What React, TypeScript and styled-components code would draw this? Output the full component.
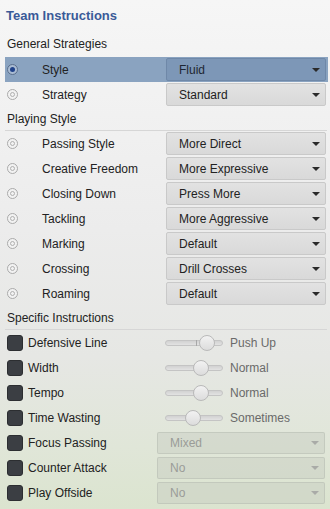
import React from "react";
import styled, { createGlobalStyle, css } from "styled-components";

const Global = createGlobalStyle`
  html, body { margin: 0; padding: 0; }
  body {
    width: 330px;
    height: 509px;
    overflow: hidden;
    font-family: "Liberation Sans", Arial, sans-serif;
    font-size: 12px;
    color: #222;
    background: linear-gradient(180deg, #f6f6f6 0%, #ececec 45%, #e6e7e4 70%, #e0e6d8 88%, #dbe4cf 100%);
  }
`;

const Panel = styled.div`
  width: 330px;
  height: 509px;
  box-sizing: border-box;
  padding: 0 2px 0 5px;
  display: flex;
  flex-direction: column;
`;

const Title = styled.div`
  height: 31px;
  display: flex;
  align-items: center;
  font-size: 13px;
  font-weight: bold;
  color: #3a5a98;
  padding-left: 1px;
`;

const Header = styled.div<{ $h: number; $line?: boolean }>`
  height: ${(p) => p.$h}px;
  box-sizing: border-box;
  display: flex;
  align-items: center;
  padding-left: 2px;
  border-bottom: 1px solid ${(p) => (p.$line === false ? "transparent" : "#d6d6d6")};
  color: #222;
  margin-right: 1px;
`;

const Row = styled.div<{ $selected?: boolean }>`
  height: 25px;
  display: flex;
  align-items: center;
  ${(p) =>
    p.$selected &&
    css`
      background: #8aa3c0;
    `}
`;

const RadioCell = styled.div`
  width: 37px;
  display: flex;
  align-items: center;
  padding-left: 2px;
  box-sizing: border-box;
`;

const Radio = styled.span<{ $on?: boolean }>`
  width: 11px;
  height: 11px;
  box-sizing: border-box;
  border-radius: 50%;
  border: 1px solid ${(p) => (p.$on ? "#5b6f8c" : "#aaa")};
  background: ${(p) => (p.$on ? "#a9bbd2" : "#f2f2f2")};
  display: flex;
  align-items: center;
  justify-content: center;
  &::after {
    content: "";
    width: 5px;
    height: 5px;
    border-radius: 50%;
    background: ${(p) => (p.$on ? "#21438a" : "transparent")};
    border: ${(p) => (p.$on ? "none" : "1px solid #b0b0b0")};
    box-sizing: border-box;
  }
`;

const Label = styled.div<{ $w: number }>`
  width: ${(p) => p.$w}px;
  flex: none;
  white-space: nowrap;
`;

const Select = styled.div<{ $variant?: "normal" | "selected" | "disabled" }>`
  flex: 1;
  height: 23px;
  box-sizing: border-box;
  margin-right: 2px;
  border-radius: 2px;
  display: flex;
  align-items: center;
  justify-content: space-between;
  padding: 0 5px 0 12px;
  ${(p) =>
    p.$variant === "selected"
      ? css`
          background: #7d97b7;
          border: 1px solid #6f88a8;
          color: #1d2633;
        `
      : p.$variant === "disabled"
      ? css`
          height: 22px;
          margin-right: 3px;
          background: rgba(195, 200, 190, 0.4);
          border: 1px solid rgba(180, 185, 175, 0.5);
          color: #9a9c98;
        `
      : css`
          background: linear-gradient(180deg, #e2e2e2 0%, #d9d9d9 100%);
          border: 1px solid #c9c9c9;
          color: #222;
        `}
`;

const Arrow = styled.span<{ $dim?: boolean }>`
  width: 0;
  height: 0;
  border-left: 4px solid transparent;
  border-right: 4px solid transparent;
  border-top: 4px solid ${(p) => (p.$dim ? "#a9aba7" : "#2a2a2a")};
`;

const CheckCell = styled.div`
  width: 23px;
  flex: none;
  display: flex;
  align-items: center;
  padding-left: 2px;
  box-sizing: border-box;
`;

const Check = styled.span`
  width: 16px;
  height: 16px;
  border-radius: 3px;
  background: #3b3e43;
  border: 1px solid #2c2e31;
  box-sizing: border-box;
`;

const SliderWrap = styled.div`
  display: flex;
  align-items: center;
  margin-left: 7px;
`;

const Track = styled.div`
  position: relative;
  width: 58px;
  height: 6px;
  border-radius: 3px;
  background: linear-gradient(180deg, #d2d2d2, #e2e2e2);
  border: 1px solid #c4c4c4;
  box-sizing: border-box;
  &::before {
    content: "";
    position: absolute;
    left: 30px;
    top: -1px;
    width: 1px;
    height: 6px;
    background: #a8a8a8;
  }
`;

const Thumb = styled.span`
  position: absolute;
  top: 50%;
  width: 16px;
  height: 16px;
  margin-left: -8px;
  margin-top: -8px;
  border-radius: 50%;
  box-sizing: border-box;
  background: linear-gradient(180deg, #f2f2f2, #dcdcdc);
  border: 1px solid #b9b9b9;
`;

const SliderText = styled.span`
  margin-left: 7px;
  color: #6a6a6a;
`;

const general = [
  { label: "Style", value: "Fluid", selected: true },
  { label: "Strategy", value: "Standard" },
];

const playing = [
  ["Passing Style", "More Direct"],
  ["Creative Freedom", "More Expressive"],
  ["Closing Down", "Press More"],
  ["Tackling", "More Aggressive"],
  ["Marking", "Default"],
  ["Crossing", "Drill Crosses"],
  ["Roaming", "Default"],
];

const sliders = [
  ["Defensive Line", 41, "Push Up"],
  ["Width", 35, "Normal"],
  ["Tempo", 35, "Normal"],
  ["Time Wasting", 27, "Sometimes"],
] as const;

const disabled = [
  ["Focus Passing", "Mixed"],
  ["Counter Attack", "No"],
  ["Play Offside", "No"],
];

export default function App() {
  return (
    <>
      <Global />
      <Panel>
        <Title>Team Instructions</Title>
        <Header $h={26} $line={false}>General Strategies</Header>
        {general.map((g) => (
          <Row key={g.label} $selected={g.selected}>
            <RadioCell>
              <Radio $on={g.selected} />
            </RadioCell>
            <Label $w={124}>{g.label}</Label>
            <Select $variant={g.selected ? "selected" : "normal"}>
              {g.value}
              <Arrow />
            </Select>
          </Row>
        ))}
        <Header $h={24}>Playing Style</Header>
        {playing.map(([l, v]) => (
          <Row key={l}>
            <RadioCell>
              <Radio />
            </RadioCell>
            <Label $w={124}>{l}</Label>
            <Select>
              {v}
              <Arrow />
            </Select>
          </Row>
        ))}
        <Header $h={24}>Specific Instructions</Header>
        {sliders.map(([l, pos, t]) => (
          <Row key={l}>
            <CheckCell>
              <Check />
            </CheckCell>
            <Label $w={130}>{l}</Label>
            <SliderWrap>
              <Track>
                <Thumb style={{ left: `${pos}px` }} />
              </Track>
              <SliderText>{t}</SliderText>
            </SliderWrap>
          </Row>
        ))}
        {disabled.map(([l, v]) => (
          <Row key={l}>
            <CheckCell>
              <Check />
            </CheckCell>
            <Label $w={129}>{l}</Label>
            <Select $variant="disabled">
              {v}
              <Arrow $dim />
            </Select>
          </Row>
        ))}
      </Panel>
    </>
  );
}
